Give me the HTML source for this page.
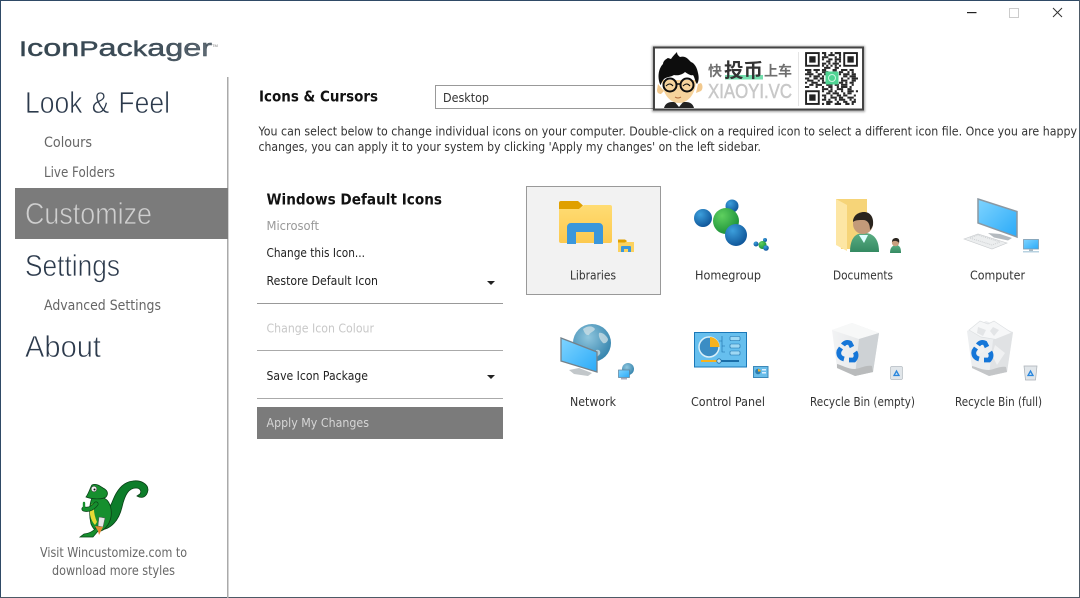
<!DOCTYPE html>
<html><head><meta charset="utf-8"><style>
html,body{margin:0;padding:0;background:#fff;width:1080px;height:598px;overflow:hidden}
svg{display:block}
.s{font-family:"DejaVu Sans","Liberation Sans",sans-serif;font-size:12.5px;fill:#333}
.h{font-family:"Liberation Sans",sans-serif}
.g{fill:#666}
.b{font-weight:bold;fill:#111}
.l{font-family:"Liberation Sans",sans-serif;fill:#2c3a4c;stroke:#fff;stroke-width:.7px;word-spacing:2px}
</style></head><body>
<svg width="1080" height="598" viewBox="0 0 1080 598" xmlns="http://www.w3.org/2000/svg">
<defs>
<linearGradient id="fy" x1="0" y1="0" x2="0" y2="1"><stop offset="0" stop-color="#ffdc73"/><stop offset="1" stop-color="#fcc94f"/></linearGradient>
<radialGradient id="bl" cx=".35" cy=".3" r=".8"><stop offset="0" stop-color="#3c9fdc"/><stop offset="1" stop-color="#0b4f93"/></radialGradient>
<radialGradient id="gr" cx=".35" cy=".3" r=".8"><stop offset="0" stop-color="#5fd05f"/><stop offset="1" stop-color="#158a35"/></radialGradient>
<linearGradient id="sc" x1="0" y1="0" x2="1" y2="1"><stop offset="0" stop-color="#7fd4ff"/><stop offset="1" stop-color="#2aaaf8"/></linearGradient>
<radialGradient id="gl" cx=".4" cy=".35" r=".75"><stop offset="0" stop-color="#8fc6de"/><stop offset="1" stop-color="#2c7da8"/></radialGradient>
<linearGradient id="bin" x1="0" y1="0" x2="1" y2="0"><stop offset="0" stop-color="#f2f3f4"/><stop offset="1" stop-color="#dfe2e4"/></linearGradient>
<linearGradient id="sh" x1="0" y1="0" x2="0" y2="1"><stop offset="0" stop-color="#5cae84"/><stop offset="1" stop-color="#348a62"/></linearGradient>
<linearGradient id="lg" x1="0" y1="0" x2="1" y2="0"><stop offset="0" stop-color="#34454f"/><stop offset=".7" stop-color="#3f4e59"/><stop offset="1" stop-color="#616c75"/></linearGradient>
<filter id="ds" x="-5%" y="-10%" width="110%" height="120%"><feGaussianBlur stdDeviation="1"/></filter>
<filter id="sf" x="-2%" y="-2%" width="104%" height="104%"><feGaussianBlur stdDeviation=".35"/></filter>
<filter id="qf" x="-2%" y="-2%" width="104%" height="104%"><feGaussianBlur stdDeviation=".14"/></filter>
</defs>

<!-- window frame -->
<rect x="0" y="0" width="1080" height="1" fill="#2f4a66"/>
<rect x="0" y="0" width="1" height="598" fill="#2f4a66"/>
<rect x="1079" y="0" width="1" height="598" fill="#4d5a66"/>
<rect x="0" y="597" width="1080" height="1" fill="#4d5a66"/>

<!-- controls -->
<rect x="967" y="12" width="9.500" height="1.200" fill="#222"/>
<rect x="1009.500" y="8.500" width="9" height="9" fill="none" stroke="#ccc"/>
<path d="M1053 8l9 9M1062 8l-9 9" stroke="#333" stroke-width="1" fill="none"/>

<!-- logo -->
<text x="19" y="56" class="h" fill="url(#lg)" stroke="#3f4e59" stroke-width=".45" textLength="193" lengthAdjust="spacingAndGlyphs"><tspan font-size="21.500">I</tspan><tspan font-size="24">con</tspan><tspan font-size="21.500">P</tspan><tspan font-size="24">ac</tspan><tspan font-size="21.500">k</tspan><tspan font-size="24">ager</tspan></text>
<text x="212" y="47" class="h" font-size="4" fill="#777">TM</text>

<!-- sidebar -->
<rect x="227" y="77" width="1.500" height="521" fill="#aaa"/>
<rect x="15" y="188" width="213" height="51" fill="#7b7b7b"/>
<text x="25" y="113" class="l" font-size="31" textLength="145" lengthAdjust="spacingAndGlyphs">Look &amp; Feel</text>
<text x="44" y="147" class="s g" style="font-size:14px" textLength="48" lengthAdjust="spacingAndGlyphs">Colours</text>
<text x="44" y="177" class="s g" style="font-size:14px" textLength="71" lengthAdjust="spacingAndGlyphs">Live Folders</text>
<text x="25" y="224" class="l" font-size="31" style="fill:#cfcfcf;stroke:#7b7b7b" textLength="127" lengthAdjust="spacingAndGlyphs">Customize</text>
<text x="25" y="276" class="l" font-size="31" textLength="95" lengthAdjust="spacingAndGlyphs">Settings</text>
<text x="44" y="310" class="s g" style="font-size:14px" textLength="117" lengthAdjust="spacingAndGlyphs">Advanced Settings</text>
<text x="25" y="357" class="l" font-size="31" textLength="76" lengthAdjust="spacingAndGlyphs">About</text>

<!-- gecko -->
<g filter="url(#sf)" transform="translate(-1 0)">
<path d="M100 530C112 530 120 520 123 507C126 494 130 488 137 488C141 488 143 491 141 494L138 496C143 499 148 497 149 490C149 484 142 480 134 481C124 482 118 490 114 500C111 508 107 513 102 516Z" fill="#0d7d2b" stroke="#074016" stroke-width=".8"/>
<path d="M93 498C100 495 108 497 111 505C114 514 112 524 104 530C99 533 95 531 92 524C90 515 90 505 93 498Z" fill="#128f2e" stroke="#074016" stroke-width=".8"/>
<path d="M92 505C89 512 92 521 96 525L98 522C95 515 94 508 96 502Z" fill="#e6da34"/>
<path d="M87 497C90 493 91 488 93 485C97 483 101 486 104 488C108 490 110 493 107 497C103 500 92 499 87 497Z" fill="#128f2e" stroke="#074016" stroke-width=".8"/>
<circle cx="95" cy="489" r="2.800" fill="#f4f4f4" stroke="#333" stroke-width=".5"/><circle cx="95.500" cy="489.500" r="1" fill="#111"/>
<path d="M97 504C93 509 89 510 85 509" stroke="#074016" stroke-width="5" fill="none" stroke-linecap="round"/>
<path d="M97 504C93 509 89 510 85 509" stroke="#128f2e" stroke-width="3.600" fill="none" stroke-linecap="round"/>
<path d="M85 509L85 503" stroke="#128f2e" stroke-width="2.400" stroke-linecap="round"/>
<path d="M98 526C96 530 92 533 85 534L81 537L94 537L100 530Z" fill="#128f2e" stroke="#074016" stroke-width=".7"/>
<path d="M100 517L106 518L104 527L99 526Z" fill="#e6e6e6" stroke="#555" stroke-width=".5"/>
<path d="M96 526L104 527L100 535L99 531Z" fill="#e38a32"/>
</g>
<text x="40" y="557" class="s g" style="font-size:13px" textLength="147" lengthAdjust="spacingAndGlyphs">Visit Wincustomize.com to</text>
<text x="52" y="575" class="s g" style="font-size:13px" textLength="123" lengthAdjust="spacingAndGlyphs">download more styles</text>

<!-- header -->
<text x="259" y="101.500" class="s b" style="font-size:15.500px" textLength="119" lengthAdjust="spacingAndGlyphs">Icons &amp; Cursors</text>
<rect x="435.500" y="85.500" width="230" height="23" fill="#fff" stroke="#999"/>
<text x="443" y="102" class="s" textLength="46" lengthAdjust="spacingAndGlyphs">Desktop</text>
<text x="258.500" y="135.500" class="s" textLength="818.500" lengthAdjust="spacingAndGlyphs">You can select below to change individual icons on your computer. Double-click on a required icon to select a different icon file. Once you are happy</text>
<text x="258.500" y="151" class="s" textLength="502.500" lengthAdjust="spacingAndGlyphs">changes, you can apply it to your system by clicking 'Apply my changes' on the left sidebar.</text>

<!-- left panel -->
<text x="266.500" y="204.500" class="s b" style="font-size:15.500px" textLength="175.500" lengthAdjust="spacingAndGlyphs">Windows Default Icons</text>
<text x="266.500" y="230" class="s" style="fill:#999" textLength="52.500" lengthAdjust="spacingAndGlyphs">Microsoft</text>
<text x="266.500" y="257" class="s" style="fill:#222" textLength="98.500" lengthAdjust="spacingAndGlyphs">Change this Icon...</text>
<text x="266.500" y="285" class="s" style="fill:#222" textLength="111.500" lengthAdjust="spacingAndGlyphs">Restore Default Icon</text>
<path d="M487 281h8l-4 4z" fill="#222"/>
<rect x="257" y="303" width="246" height="1" fill="#999"/>
<text x="266.500" y="332.500" class="s" style="fill:#c8c8c8" textLength="107.500" lengthAdjust="spacingAndGlyphs">Change Icon Colour</text>
<rect x="257" y="350" width="246" height="1" fill="#aaa"/>
<text x="266.500" y="380" class="s" style="fill:#222" textLength="101.500" lengthAdjust="spacingAndGlyphs">Save Icon Package</text>
<path d="M487 375h8l-4 4z" fill="#222"/>
<rect x="257" y="398" width="246" height="1" fill="#aaa"/>
<rect x="257" y="407" width="246" height="32" fill="#7b7b7b"/>
<text x="266.500" y="427" class="s" style="fill:#d6d6d6" textLength="102.500" lengthAdjust="spacingAndGlyphs">Apply My Changes</text>

<!-- selection -->
<rect x="526.500" y="186.500" width="134" height="108" fill="#f2f2f2" stroke="#999"/>

<!-- labels -->
<text x="570" y="279.500" class="s" textLength="46" lengthAdjust="spacingAndGlyphs">Libraries</text>
<text x="695" y="279.500" class="s" textLength="66" lengthAdjust="spacingAndGlyphs">Homegroup</text>
<text x="833" y="279.500" class="s" textLength="60" lengthAdjust="spacingAndGlyphs">Documents</text>
<text x="970" y="279.500" class="s" textLength="55" lengthAdjust="spacingAndGlyphs">Computer</text>
<text x="570" y="406" class="s" textLength="46" lengthAdjust="spacingAndGlyphs">Network</text>
<text x="691" y="406" class="s" textLength="74" lengthAdjust="spacingAndGlyphs">Control Panel</text>
<text x="810" y="406" class="s" textLength="105" lengthAdjust="spacingAndGlyphs">Recycle Bin (empty)</text>
<text x="955" y="406" class="s" textLength="87" lengthAdjust="spacingAndGlyphs">Recycle Bin (full)</text>

<!-- libraries -->
<path d="M559 203a2 2 0 0 1 2-2h17l5 4.500l-5 4.500h-19z" fill="#e0a000"/>
<path d="M559 209l20 0l5-4h26a2 2 0 0 1 2 2v34a2 2 0 0 1-2 2h-49a2 2 0 0 1-2-2z" fill="url(#fy)"/>
<path d="M567 244v-17a4 4 0 0 1 4-4h28a4 4 0 0 1 4 4v17h-9v-12h-18v12z" fill="#3a97dc"/>
<path d="M618 241a1 1 0 0 1 1-1h6l2 2h7v10h-16z" fill="#fcd25f"/><path d="M618 239.500h7l2 1.500-2 1.500h-7z" fill="#e0a000"/>
<path d="M621 252v-5a1 1 0 0 1 1-1h8a1 1 0 0 1 1 1v5h-3v-3h-4v3z" fill="#3a97dc"/>

<!-- homegroup -->
<circle cx="732" cy="206" r="6.500" fill="url(#bl)"/>
<circle cx="703" cy="218" r="9" fill="url(#bl)"/>
<circle cx="726" cy="221" r="13" fill="url(#gr)"/>
<circle cx="736" cy="235" r="11" fill="url(#bl)"/>
<circle cx="756" cy="244" r="2.500" fill="url(#bl)"/>
<circle cx="765" cy="240" r="2" fill="url(#bl)"/>
<circle cx="762.500" cy="245" r="4" fill="url(#gr)"/>
<circle cx="766" cy="248" r="2.800" fill="url(#bl)"/>

<!-- documents -->
<path d="M836 199h31v50h-26z" fill="#f6d478"/>
<path d="M836 199l11 6v46l-11-6z" fill="#fde6a4"/>
<path d="M850 252c0-10 3-16 8-18l8-1c9 1 13 8 13 19z" fill="url(#sh)"/>
<path d="M859 235l5 8 4-8z" fill="#dff"/>
<circle cx="863" cy="224" r="10" fill="#c39a79"/>
<path d="M853 222c0-7 6-10 11-10c6 0 10 5 9 13c-1 3-2 4-3 5c0-6-2-10-7-10c-4 0-8 0-10 2z" fill="#2a241e"/>
<path d="M890 253c0-5 2-7 5-8h2c3 1 4 3 4 8z" fill="url(#sh)"/>
<circle cx="895.500" cy="242.500" r="3.700" fill="#c9a07f"/>
<path d="M892 242c0-3 2-4 4-4c2 0 4 1 3 5c-1-2-5-3-7-1z" fill="#2c2620"/>

<!-- computer -->
<path d="M978 199l39 12.500v25.500l-39-14z" fill="url(#sc)" stroke="#8b98a2" stroke-width="1.500"/>
<path d="M988 233l12 1 12 4-4 2.500-14-3z" fill="#b4babf"/>
<path d="M964 239l14-5 29 9-15 6z" fill="#eceeef" stroke="#c8cbce" stroke-width=".6"/>
<path d="M970 238l8-3 22 7-8 3z" fill="none" stroke="#cdd0d2" stroke-width="1" stroke-dasharray="1 1"/>
<rect x="1023.500" y="239.500" width="15" height="9.500" fill="url(#sc)" stroke="#7e99ad" stroke-width=".8"/>
<rect x="1029" y="249" width="4" height="2" fill="#a8b8c2"/><rect x="1023" y="251" width="16" height="1.500" fill="#b8d2e0"/>

<!-- network -->
<circle cx="592" cy="343" r="19" fill="url(#gl)"/>
<path d="M583 329c5-4 10-3 12 0c-1 3-5 3-6 6c-3 1-5-3-6-6zM599 333c3-1 7 2 9 6c0 3-3 5-5 4c-2-2-5-6-4-10zM596 350c3-1 5 1 4 4l-3 3z" fill="#cfe0e6" opacity=".75"/>
<path d="M561 338l36 14v20l-36-11z" fill="url(#sc)" stroke="#74818a" stroke-width="1.300"/>
<path d="M569 370l10-2 13 5-4 3-14-2z" fill="#c2c7ca"/>
<circle cx="628" cy="369" r="6" fill="url(#gl)"/>
<rect x="618.500" y="370" width="11" height="7.500" fill="url(#sc)" stroke="#5e7f97" stroke-width=".7"/>
<rect x="621" y="378" width="6" height="1.500" fill="#aab"/>

<!-- control panel -->
<rect x="694.500" y="332.500" width="52" height="34.500" fill="#66bfee" stroke="#1a78b8"/>
<circle cx="709" cy="347" r="10" fill="#3b8dc4" stroke="#d9eff9" stroke-width="1.500"/>
<path d="M710 337a10 10 0 0 1 9.500 10h-9.500z" fill="#f7b21d"/>
<path d="M719 341h3v-5M722 346h3M722 341v11h3" stroke="#1a6ea8" fill="none" stroke-width=".6"/>
<rect x="730" y="336.500" width="10" height="4" rx="1" fill="#9ed8f4" stroke="#1a6ea8" stroke-width=".6"/>
<rect x="730" y="344" width="10" height="4" rx="1" fill="#9ed8f4" stroke="#1a6ea8" stroke-width=".6"/>
<rect x="730" y="351" width="10" height="4" rx="1" fill="#9ed8f4" stroke="#1a6ea8" stroke-width=".6"/>
<rect x="701" y="360" width="18" height="2" fill="#f7b21d"/><rect x="719" y="360" width="20" height="2" fill="#1a6ea8"/>
<circle cx="719" cy="361" r="2.200" fill="#bfe6fa" stroke="#1a6ea8" stroke-width=".8"/>
<rect x="753.500" y="366.500" width="14.500" height="11" fill="#69bde9" stroke="#3d88b8"/>
<circle cx="758" cy="371.500" r="2.800" fill="#2c7db0"/><path d="M758 369v2.500h2.800a2.800 2.800 0 0 0-2.800-2.500z" fill="#f7b21d"/>
<rect x="762" y="369" width="4" height="1.500" fill="#def"/><rect x="762" y="372" width="4" height="1.500" fill="#def"/>

<!-- recycle empty -->
<path d="M832 330l20-7 27 10-6 39-18 4-18-8z" fill="url(#bin)"/>
<path d="M852 323l27 10-20 6-27-9z" fill="#f7f8f8"/>
<path d="M859 339l20-6-6 39-18 4z" fill="#ced2d5"/>
<path d="M837 368l18 8 18-4-1-6c-6-1-10 2-17 3c-8 0-13-4-18-5z" fill="#b9bbbc"/>
<g fill="none" stroke="#1576d8" stroke-width="4.800">
<path d="M843 345c2-3 5-3 7-2l2 4"/><path d="M855 352c2 3 1 6-1 8l-5 0"/><path d="M844 359c-4-1-6-4-5-8l2-3"/>
</g>
<rect x="890.500" y="366.500" width="12" height="13" rx="1.500" fill="#e1e6ea" stroke="#b4bbc1" stroke-width=".7"/>
<path d="M896.500 371l2.500 4.500h-5z" fill="#c4dcf2" stroke="#2a86dc" stroke-width="1.300"/>

<!-- recycle full -->
<path d="M967 331l19-10 27 11-6 40-18 4-17-8z" fill="#eceef0"/>
<path d="M969 330l11-9 8 3 6-3 9 6 9 6-13 7-18-3z" fill="#f6f7f8" stroke="#dde0e2" stroke-width=".7"/>
<path d="M978 327l8 3-3 6-6-3zM993 327l6 3-5 6-4-5z" fill="#e3e5e7"/>
<path d="M993 340l20-8-6 40-18 4z" fill="#e0e2e4"/>
<path d="M972 368l17 8 18-4-1-5c-6-1-10 2-17 3c-8 0-12-3-17-4z" fill="#c4c6c8"/>
<path d="M995 345l10 8-8 12-5-10zM975 344l6-3 4 10-6 3z" fill="#f0f1f2"/>
<g fill="none" stroke="#1576d8" stroke-width="4.800">
<path d="M978 345c2-3 5-3 7-2l2 4"/><path d="M990 352c2 3 1 6-1 8l-5 0"/><path d="M979 359c-4-1-6-4-5-8l2-3"/>
</g>
<path d="M1024 366h13l-1.500 14h-10z" fill="#e1e6ea" stroke="#a8afb5" stroke-width=".7"/>
<path d="M1030.500 371l2.500 4.500h-5z" fill="#c4dcf2" stroke="#2a86dc" stroke-width="1.300"/>

<!-- badge -->
<rect x="652" y="46" width="213" height="66" fill="#000" opacity=".35" filter="url(#ds)"/>
<rect x="654" y="47.500" width="209" height="62" fill="#fff" stroke="#444" stroke-width="2"/>
<clipPath id="bc"><rect x="655" y="49" width="207" height="59"/></clipPath>
<g clip-path="url(#bc)" filter="url(#sf)">
<path d="M664 108c1-4 4-6 8-6h14c4 0 7 2 8 6z" fill="#222"/>
<path d="M674 101l5 6 5-6z" fill="#fff"/>
<path d="M658 84l-1 6c0 3 2 4 4 4l3-3zM698 84l3-1c2 2 2 6 0 8l-5 2z" fill="#f2c98e"/>
<path d="M662 80c0 14 8 23 17 23c9 0 17-9 17-23z" fill="#f6d39c"/>
<path d="M660 84c-3-8-1-16 3-20c0-3 3-5 5-6l3 1c2-3 5-6 6-7c0 3 2 4 3 5c3-1 6 0 8 2l3 3c3 1 6 5 7 11c1 4 1 8-1 11c-2-2-2-6-4-9c-2 1-5-1-8-3c-2 2-6 4-11 3c-3 2-8 2-10 4c-2 2-3 6-4 6z" fill="#111"/>
<circle cx="670" cy="85" r="6.500" fill="none" stroke="#111" stroke-width="2"/>
<circle cx="687" cy="85" r="6.500" fill="none" stroke="#111" stroke-width="2"/>
<path d="M677 84h3" stroke="#111" stroke-width="1.500"/>
<path d="M666 86q4-4 7 0M683 86q4-4 7 0" stroke="#111" stroke-width="1.100" fill="none"/>
<path d="M675 97q3 2 6 0" stroke="#b06a3a" stroke-width="1" fill="none"/>
</g>
<rect x="725" y="75" width="38" height="4.500" fill="#74dfae"/>
<text x="708" y="76" font-family="'Noto Sans CJK SC',sans-serif" font-size="14" font-weight="700" fill="#6f6f6f">快</text>
<text x="724" y="77" font-family="'Noto Sans CJK SC',sans-serif" font-size="19.500" font-weight="700" fill="#333">投币</text>
<text x="764" y="76" font-family="'Noto Sans CJK SC',sans-serif" font-size="14" font-weight="700" fill="#6f6f6f">上车</text>
<text x="708" y="98" class="h" font-size="20" fill="#c8c8c8" stroke="#c8c8c8" stroke-width=".5" textLength="84" lengthAdjust="spacingAndGlyphs">XIAOYI.VC</text>
<rect x="798" y="52" width="1" height="54" fill="#e4e4e4"/>

<!-- QR -->
<svg x="805" y="52" width="53" height="53" viewBox="0 0 25 25">
<g filter="url(#qf)">
<g fill="none" stroke="#222" stroke-width=".9"><rect x=".5" y=".5" width="6" height="6"/><rect x="18.500" y=".5" width="6" height="6"/><rect x=".5" y="18.500" width="6" height="6"/></g>
<g fill="#222"><rect x="2" y="2" width="3" height="3"/><rect x="20" y="2" width="3" height="3"/><rect x="2" y="20" width="3" height="3"/></g>
<path stroke="#2a2a2a" stroke-width=".95" fill="none" d="M8 .5h2m2 0h1m1 0h3M9 1.500h1m1 0h3m2 0h1M8 2.500h3m3 0h1m1 0h1M8 3.500h1m2 0h2m1 0h3M10 4.500h2m2 0h1m1 0h1M8 5.500h2m1 0h1m1 0h3M8 6.500h1m1 0h1m1 0h1m1 0h1m1 0h1M9 7.500h3m2 0h2M0 8.500h3m1 0h3m1 0h2m3 0h2m2 0h3m1 0h2M1 9.500h2m2 0h1m2 0h3m2 0h2m1 0h2m2 0h1m1 0h1M0 10.500h4m2 0h2m1 0h2m5 0h1m1 0h3m1 0h2M2 11.500h1m1 0h3m1 0h1M18 11.500h2m1 0h3M0 12.500h2m2 0h2m1 0h2M17 12.500h1m2 0h1m1 0h3M1 13.500h3m2 0h1m1 0h1M17 13.500h3m2 0h2M0 14.500h1m2 0h3m2 0h2m6 0h2m1 0h1m1 0h2M2 15.500h2m1 0h3m2 0h3m1 0h2m1 0h3m2 0h1M0 16.500h2m3 0h1m2 0h1m2 0h2m2 0h1m1 0h3m1 0h1M8 17.500h3m1 0h1m2 0h3m2 0h2M8 18.500h1m2 0h2m1 0h1m2 0h1m2 0h3m1 0h1M10 19.500h2m1 0h3m2 0h1m1 0h2M8 20.500h2m2 0h1m2 0h2m1 0h2m3 0h1M9 21.500h1m2 0h3m1 0h2m2 0h3M8 22.500h2m1 0h1m2 0h1m1 0h3m2 0h1m1 0h1M10 23.500h3m2 0h1m2 0h2m2 0h2M8 24.500h1m1 0h2m2 0h3m2 0h2m1 0h1"/>
</g>
</svg>
<rect x="825.500" y="71.500" width="13" height="13" rx="1" fill="#4fd493"/>
<circle cx="832" cy="78" r="3.500" fill="none" stroke="#c8f5df" stroke-width="1"/>
</svg>
</body></html>
